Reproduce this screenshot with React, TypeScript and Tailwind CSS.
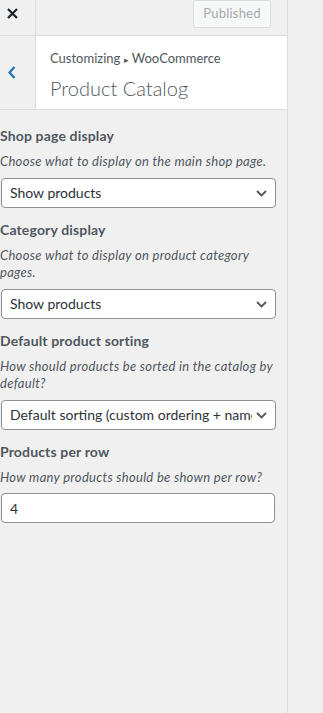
interface CatalogControl {
  id: string;
  label: string;
  description: string;
  kind: "select" | "number";
  value: string;
}

const controls: CatalogControl[] = [
  {
    id: "shop-page-display",
    label: "Shop page display",
    description: "Choose what to display on the main shop page.",
    kind: "select",
    value: "Show products",
  },
  {
    id: "category-display",
    label: "Category display",
    description: "Choose what to display on product category pages.",
    kind: "select",
    value: "Show products",
  },
  {
    id: "default-sorting",
    label: "Default product sorting",
    description: "How should products be sorted in the catalog by default?",
    kind: "select",
    value: "Default sorting (custom ordering + name)",
  },
  {
    id: "products-per-row",
    label: "Products per row",
    description: "How many products should be shown per row?",
    kind: "number",
    value: "4",
  },
];

function ControlField({ control }: { control: CatalogControl }) {
  if (control.kind === "number") {
    return (
      <div className="ml-px flex h-[30px] w-[274px] items-center rounded-[4px] border border-[#8c8f94] bg-white pl-[8px] text-[14px] text-[#2c3338]">
        {control.value}
      </div>
    );
  }

  return (
    <div className="relative ml-px flex h-[30px] w-[275px] items-center rounded-[4px] border border-[#8c8f94] bg-white pl-[8px] pr-[23px] text-[14px] text-[#2c3338]">
      <span className="min-w-0 overflow-hidden whitespace-nowrap">{control.value}</span>
      <svg
        className="absolute right-[8px] top-[11px]"
        width="11"
        height="7"
        viewBox="0 0 11 7"
        fill="none"
      >
        <path d="M1 1l4.5 4.5L10 1" stroke="#50575e" strokeWidth="1.8" />
      </svg>
    </div>
  );
}

export default function App() {
  return (
    <div className="flex min-h-[713px] w-full bg-[#f0f0f1] font-['Lato',sans-serif] text-[#50575e]">
      <aside className="flex w-[288px] shrink-0 flex-col border-r border-[#dcdcde]">
        <div className="flex h-[36px] border-b border-[#dcdcde]">
          <button
            type="button"
            className="flex w-[36px] items-start border-r border-[#dcdcde] pl-[7px] pt-[8px]"
          >
            <svg width="11" height="11" viewBox="0 0 11 11" fill="none">
              <path d="M1 1l9 9M10 1l-9 9" stroke="#1d2327" strokeWidth="2.2" />
            </svg>
          </button>
          <button
            type="button"
            className="ml-auto mr-[16px] flex h-[28px] w-[78px] items-center justify-center rounded-[3px] border border-[#dcdcde] bg-[#f6f7f7] text-[13px] tracking-[0.2px] text-[#a7aaad]"
          >
            Published
          </button>
        </div>

        <div className="flex h-[74px] border-b border-[#dcdcde] bg-white">
          <button
            type="button"
            className="flex w-[36px] items-center border-r border-[#dcdcde] bg-[#f0f0f1] pl-[8px]"
          >
            <svg width="8" height="13" viewBox="0 0 8 13" fill="none">
              <path d="M6.5 1L1.5 6.5l5 5.5" stroke="#2271b1" strokeWidth="2.2" />
            </svg>
          </button>
          <div className="flex flex-col pl-[14px] pt-[13px]">
            <span className="text-[13px] leading-[18px]">
              Customizing <span className="text-[9px]">▸</span> WooCommerce
            </span>
            <h3 className="mt-[5px] text-[20px] font-light leading-[28px]">
              Product Catalog
            </h3>
          </div>
        </div>

        <ul className="flex flex-col gap-[12px] pt-[16px]">
          {controls.map((control) => (
            <li key={control.id} className="flex flex-col">
              <label className="mb-[7px] text-[14px] font-bold leading-[20px] tracking-[0.15px]">
                {control.label}
              </label>
              <p className="mb-[7px] w-[276px] text-[13px] italic leading-[17.5px] tracking-[0.3px]">
                {control.description}
              </p>
              <ControlField control={control} />
            </li>
          ))}
        </ul>
      </aside>
    </div>
  );
}
